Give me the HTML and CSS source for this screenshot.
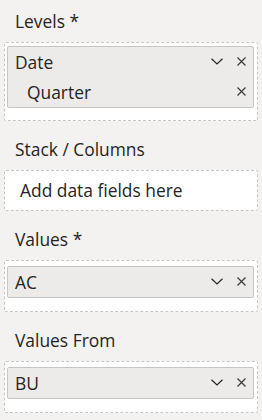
FILE: index.html
```html
<!DOCTYPE html>
<html lang="en">
<head>
    <meta charset="UTF-8">
    <title>Fields</title>
    <link rel="stylesheet" href="styles.css">
</head>
<body>
    <div class="pane">
        <section class="bucket">
            <div class="bucket-title">Levels *</div>
            <div class="well multi">
                <div class="pill">
                    <div class="field">
                        <span class="field-name">Date</span>
                        <svg class="icon chevron" viewBox="0 0 12 7"><path d="M0.5 0.8 L6 6 L11.5 0.8"/></svg>
                        <svg class="icon close" viewBox="0 0 9 9"><path d="M0.5 0.5 L8.5 8.5 M8.5 0.5 L0.5 8.5"/></svg>
                    </div>
                    <div class="field sub">
                        <span class="field-name">Quarter</span>
                        <svg class="icon close" viewBox="0 0 9 9"><path d="M0.5 0.5 L8.5 8.5 M8.5 0.5 L0.5 8.5"/></svg>
                    </div>
                </div>
            </div>
        </section>

        <section class="bucket">
            <div class="bucket-title">Stack / Columns</div>
            <div class="well empty">Add data fields here</div>
        </section>

        <section class="bucket">
            <div class="bucket-title">Values *</div>
            <div class="well">
                <div class="pill">
                    <div class="field">
                        <span class="field-name">AC</span>
                        <svg class="icon chevron" viewBox="0 0 12 7"><path d="M0.5 0.8 L6 6 L11.5 0.8"/></svg>
                        <svg class="icon close" viewBox="0 0 9 9"><path d="M0.5 0.5 L8.5 8.5 M8.5 0.5 L0.5 8.5"/></svg>
                    </div>
                </div>
            </div>
        </section>

        <section class="bucket">
            <div class="bucket-title">Values From</div>
            <div class="well">
                <div class="pill">
                    <div class="field">
                        <span class="field-name">BU</span>
                        <svg class="icon chevron" viewBox="0 0 12 7"><path d="M0.5 0.8 L6 6 L11.5 0.8"/></svg>
                        <svg class="icon close" viewBox="0 0 9 9"><path d="M0.5 0.5 L8.5 8.5 M8.5 0.5 L0.5 8.5"/></svg>
                    </div>
                </div>
            </div>
        </section>
    </div>
</body>
</html>
```

FILE: styles.css
```css
body {
    margin: 0;
    background: #f3f2f1;
    font-family: "Open Sans", "Noto Sans", sans-serif;
    font-size: 17.4px;
    color: #252423;
}

.pane {
    padding: 9px 4px 0;
}

.bucket {
    margin-bottom: 16px;
}

.bucket-title {
    line-height: 24px;
    padding-left: 11px;
    margin-bottom: 9px;
}

.well {
    background: #fff;
    border: 1px dashed #c8c6c4;
    border-radius: 2px;
    padding: 5px 3px 13px 2px;
}

.well.multi {
    padding-top: 3px;
    padding-bottom: 12px;
}

.well.empty {
    padding: 0 0 0 15px;
    height: 39px;
    line-height: 39px;
}

.pill {
    background: #edebe9;
    border: 1px solid #c8c6c4;
    border-radius: 2px;
}

.field {
    display: flex;
    align-items: center;
    height: 30px;
    padding: 0 7px 0 7px;
}

.field.sub {
    padding-left: 19px;
}

.field-name {
    flex: 1;
}

.icon {
    fill: none;
    stroke: #252423;
    stroke-width: 1.2;
}

.chevron {
    width: 12px;
    height: 7px;
    margin: -1px 14px 0 0;
}

.close {
    width: 9px;
    height: 9px;
    margin-top: -1px;
    stroke: #3b3a39;
}
```
